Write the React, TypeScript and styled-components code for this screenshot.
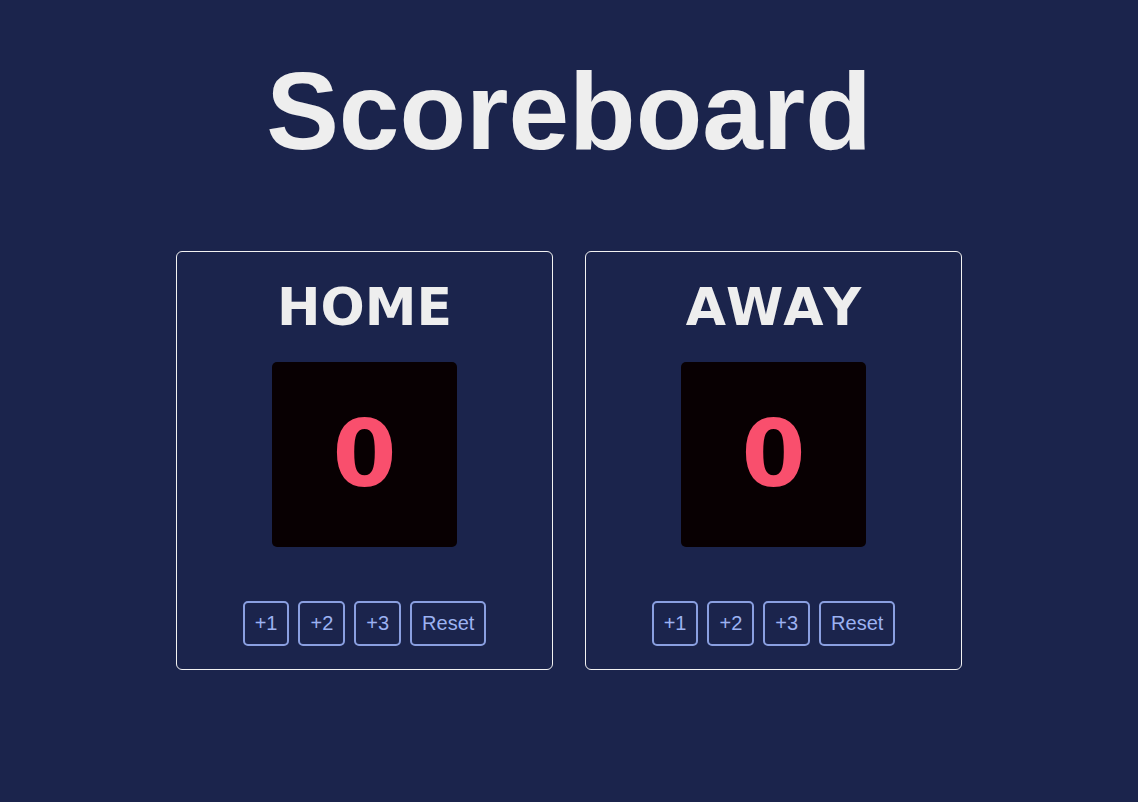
import React, { useState } from "react";
import styled, { createGlobalStyle } from "styled-components";

const Global = createGlobalStyle`
  html, body { margin: 0; padding: 0; background: #1b244c; }
  body { font-family: "Liberation Sans", Arial, sans-serif; }
`;

const Page = styled.main`
  min-height: 802px;
  background: #1b244c;
  display: flex;
  flex-direction: column;
  align-items: center;
  padding-top: 57px;
  box-sizing: border-box;
`;

const Title = styled.h1`
  margin: 0;
  font-family: "Liberation Sans", Arial, sans-serif;
  font-weight: 700;
  font-size: 109px;
  line-height: 1;
  color: #eeeeee;
`;

const Boards = styled.div`
  display: flex;
  gap: 32px;
  margin-top: 85px;
`;

const Card = styled.section`
  width: 377px;
  height: 419px;
  box-sizing: border-box;
  border: 1px solid #f2f2f2;
  border-radius: 6px;
  display: flex;
  flex-direction: column;
  align-items: center;
  padding-top: 29px;
`;

const TeamName = styled.h2`
  margin: 0;
  font-family: "DejaVu Sans", Verdana, sans-serif;
  font-weight: 700;
  font-size: 52px;
  line-height: 1;
  font-kerning: none;
  color: #eeeeee;
`;

const ScoreBox = styled.div`
  margin-top: 29px;
  width: 185px;
  height: 185px;
  border-radius: 5px;
  background: #080002;
  display: flex;
  align-items: center;
  justify-content: center;
`;

const Score = styled.span`
  font-family: "DejaVu Sans", Verdana, sans-serif;
  font-weight: 700;
  font-size: 92px;
  line-height: 1;
  color: #f94f6d;
`;

const Buttons = styled.div`
  margin-top: 54px;
  display: flex;
  gap: 9px;
`;

const Btn = styled.button`
  height: 45px;
  padding: 0 10px;
  box-sizing: border-box;
  background: transparent;
  border: 2px solid #8a9fe0;
  border-radius: 5px;
  color: #9cb2f2;
  font-family: "Liberation Sans", Arial, sans-serif;
  font-size: 20px;
  cursor: pointer;
`;

function Team({ name }: { name: string }) {
  const [score, setScore] = useState(0);
  return (
    <Card>
      <TeamName>{name}</TeamName>
      <ScoreBox>
        <Score>{score}</Score>
      </ScoreBox>
      <Buttons>
        <Btn onClick={() => setScore(score + 1)}>+1</Btn>
        <Btn onClick={() => setScore(score + 2)}>+2</Btn>
        <Btn onClick={() => setScore(score + 3)}>+3</Btn>
        <Btn onClick={() => setScore(0)}>Reset</Btn>
      </Buttons>
    </Card>
  );
}

export default function App() {
  return (
    <>
      <Global />
      <Page>
        <Title>Scoreboard</Title>
        <Boards>
          <Team name="HOME" />
          <Team name="AWAY" />
        </Boards>
      </Page>
    </>
  );
}
